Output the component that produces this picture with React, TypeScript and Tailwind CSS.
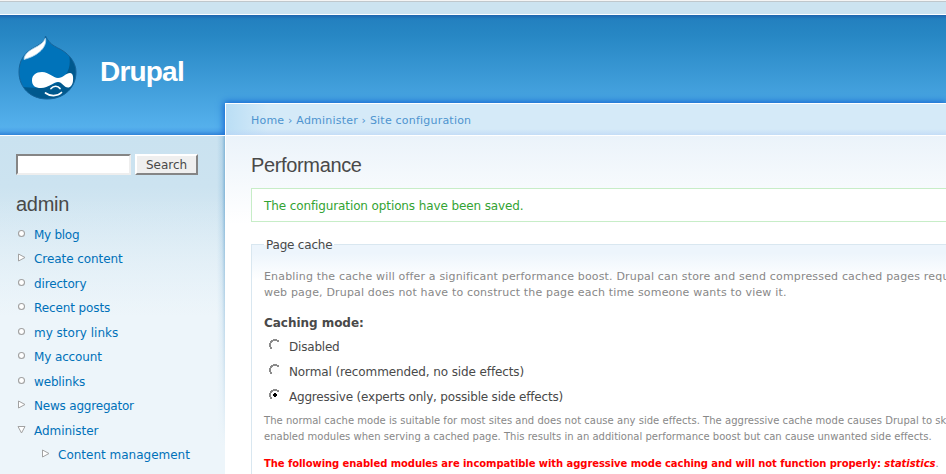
import React from 'react';

const dropPath =
  'M27.500 1C27 5 25 7.500 22 9C18 11.500 15 13 12 15C5 20 1 27 1 37C1 53 13 64 29 64C46 64 58 53 58 37C58 28 52 20 43.700 15C38 12 34 10 32 7.700C30 5.500 28.500 3 27.500 1Z';

function Logo() {
  return (
    <svg width="60" height="66" viewBox="0 0 60 66" className="block">
      <defs>
        <clipPath id="drop"><path d={dropPath} /></clipPath>
      </defs>
      <path d={dropPath} fill="#0073ba" />
      <g clipPath="url(#drop)">
        <path d="M51 20C54 33 48 44 36 49C24 54 10 53 1 51.500L8 66H60V20Z" fill="#00598e" />
      </g>
      <path d={dropPath} fill="none" stroke="#17649a" strokeWidth="1" />
      <path d="M27 3.500C26 7 22 10 18 12C12 15 6 19 6 24.500C11 23 17 21 22 16.500C26 13 28.500 8 27.500 3.500Z" fill="#fff" stroke="#a9d0ea" strokeWidth="0.800" />
      <path d="M14 45.500C14 40 18 37 24 37C31 37 35 43 40 43C45 43 48 38 52 38C55 38 55.500 42 55 46C54.500 50 52.500 52.500 50 52.500C46 52.500 44 47 40 47C35 47 31 53 23 53C17 53 14 50.500 14 45.500Z" fill="#fff" />
      <path d="M33 53.500C35.500 50.500 40 50.500 42 53.500M27.500 58C32 61.500 39.500 61.500 43.500 57.500" fill="none" stroke="#fff" strokeWidth="1.700" strokeLinecap="round" />
    </svg>
  );
}

type Kind = 'leaf' | 'closed' | 'open';

function Bullet({ kind }: { kind: Kind }) {
  return (
    <svg width="9" height="9" viewBox="0 0 9 9" className="block shrink-0" fill="#fff" stroke="#a2a2a2">
      {kind === 'leaf' && <circle cx="4.500" cy="4.500" r="3" strokeWidth="1.100" />}
      {kind === 'closed' && <path d="M1.500 1V8L8 4.500Z" strokeLinejoin="round" />}
      {kind === 'open' && <path d="M1 1.500H8L4.500 8Z" strokeLinejoin="round" />}
    </svg>
  );
}

const menu: { label: string; kind: Kind; nested?: boolean; spacing: string }[] = [
  { label: 'My blog', kind: 'leaf', spacing: 'tracking-[-0.280px]' },
  { label: 'Create content', kind: 'closed', spacing: 'tracking-[-0.070px]' },
  { label: 'directory', kind: 'leaf', spacing: 'tracking-[-0.150px]' },
  { label: 'Recent posts', kind: 'leaf', spacing: 'tracking-[-0.100px]' },
  { label: 'my story links', kind: 'leaf', spacing: 'tracking-[0px]' },
  { label: 'My account', kind: 'leaf', spacing: 'tracking-[-0.120px]' },
  { label: 'weblinks', kind: 'leaf', spacing: 'tracking-[-0.150px]' },
  { label: 'News aggregator', kind: 'closed', spacing: 'tracking-[-0.200px]' },
  { label: 'Administer', kind: 'open', spacing: 'tracking-[-0.050px]' },
  { label: 'Content management', kind: 'closed', nested: true, spacing: 'tracking-[0px]' },
];

function Radio({ checked }: { checked?: boolean }) {
  return (
    <svg width="12" height="12" viewBox="0 0 12 12" className="-mt-1 block shrink-0" fill="none" shapeRendering="crispEdges">
      <path d="M4 1H8V2H10V4H11V8H10V10H8V11H4V10H2V8H1V4H2V2H4Z" fill="#fdfdfd" />
      <path d="M4 0H8V1H10V3H8V2H4V3H3V4H2V8H3V10H1V8H0V4H1V2H2V1H4Z" fill="#8a8a8a" />
      {checked && <path d="M5 4H7V5H8V7H7V8H5V7H4V5H5Z" fill="#000" />}
    </svg>
  );
}

const modes = [
  { label: 'Disabled', checked: false, spacing: 'tracking-[-0.200px]' },
  { label: 'Normal (recommended, no side effects)', checked: false, spacing: 'tracking-[-0.110px]' },
  { label: 'Aggressive (experts only, possible side effects)', checked: true, spacing: 'tracking-[-0.190px]' },
];

export default function App() {
  return (
    <div className="flex h-[474px] w-[946px] flex-col overflow-hidden bg-[#edf5fa] font-['DejaVu_Sans',sans-serif] text-[12px] text-[#494949]">
      <div className="h-[15px] shrink-0 border-b border-white bg-[#cce3f0]">
        <div className="h-px bg-[#f4f4f4]" />
        <div className="h-px bg-[#bfc7cc]" />
      </div>
      <div className="flex h-[459px] bg-[linear-gradient(180deg,#1f66ae_0px,#2380bf_4px,#2787c4_20px,#55b0ec_112px,#4ca4e9_116px,#2f83d8_120px)]">
        <aside className="flex w-[225px] shrink-0 flex-col">
          <header className="flex h-[120px] shrink-0 pl-[18px] pt-[20px]">
            <Logo />
            <h1 className="ml-[22px] pt-[20px] font-['Liberation_Sans',Arial,sans-serif] text-[28px] font-bold leading-[34px] tracking-[-0.800px] text-white">Drupal</h1>
          </header>
          <div className="relative grow border-t border-white bg-[linear-gradient(180deg,transparent_60px,#edf5fa_310px),linear-gradient(90deg,transparent_217px,#5f9fcb33_222px,#5f9fcbaa_225px),linear-gradient(180deg,#cae2f0_0px,#cce3f0_50px,#edf5fa_180px)] px-4 pt-[18px]">
            <form className="flex h-[21px] gap-1">
              <input aria-label="Search terms" className="h-[21px] w-[115px] border-2 border-b-[#eee] border-l-[#858585] border-r-[#eee] border-t-[#858585] bg-white" />
              <button type="button" className="h-[21px] w-[63px] border-2 border-b-[#858585] border-l-white border-r-[#858585] border-t-white bg-[#efefef] leading-[18px]">Search</button>
            </form>
            <h2 className="mt-[17px] h-[30.500px] font-['Liberation_Sans',Arial,sans-serif] text-[20px] leading-[24px] tracking-[-0.300px]">admin</h2>
            <ul>
              {menu.map((item) => (
                <li key={item.label} className={`flex h-[24.500px] items-center gap-2 text-[#0071b9] ${item.nested ? 'pl-[25px]' : 'pl-px'}`}>
                  <span className="-mt-[3px]"><Bullet kind={item.kind} /></span>
                  <a className={`whitespace-nowrap ${item.spacing}`}>{item.label}</a>
                </li>
              ))}
            </ul>
          </div>
        </aside>
        <div className="flex w-[721px] flex-col">
          <div className="h-[88px] shrink-0" />
          <main className="flex grow flex-col">
            <nav className="h-[33px] shrink-0 border-b border-l border-t border-white bg-[linear-gradient(180deg,transparent_25px,#b8d3f5aa_32px),linear-gradient(90deg,#badef5_0,#d5eaf8_42px)] pl-[25px] text-[11px] leading-[33px] text-[#4e94cf] shadow-[0_0_7px_1px_#0f5fd0]">
              <span className="whitespace-nowrap tracking-[0.210px]">Home › Administer › Site configuration</span>
            </nav>
            <div className="relative grow border-l border-white bg-[linear-gradient(180deg,#ebf3fa_0,#fff_88px)] pl-[25px]">
              <h2 className="h-[52px] pt-[17px] font-['Liberation_Sans',Arial,sans-serif] text-[20px] leading-[24px] tracking-[-0.350px]">Performance</h2>
              <div className="h-[34px] border border-r-0 border-[#c7edc7] bg-white pl-3 leading-[34px] text-[#33a333]">
                <span className="tracking-[-0.110px]">The configuration options have been saved.</span>
              </div>
              <fieldset className="mt-[14px] h-[250px] w-[740px] border border-[#d9e7f0] bg-[linear-gradient(180deg,#edf5fc_8px,#fff_35px)] px-3">
                <legend className="h-[16px] px-[2px] leading-[18px] tracking-[-0.200px]">Page cache</legend>
                <div className="mt-[17px] whitespace-nowrap text-[11px] leading-[16px] text-[#888]">
                  <p><span className="tracking-[0.170px]">Enabling the cache will offer a significant performance boost. Drupal can store and send compressed cached pages requ</span></p>
                  <p><span className="tracking-[0.170px]">web page, Drupal does not have to construct the page each time someone wants to view it.</span></p>
                </div>
                <h3 className="mt-[14px] font-bold leading-[16px] tracking-[-0.040px]">Caching mode:</h3>
                <div className="mt-[3px]">
                  {modes.map((mode) => (
                    <label key={mode.label} className="flex h-[25px] items-center gap-2 whitespace-nowrap pl-[5px]">
                      <Radio checked={mode.checked} />
                      <span className={mode.spacing}>{mode.label}</span>
                    </label>
                  ))}
                </div>
                <div className="mt-[4px] whitespace-nowrap text-[10px] leading-[16px] text-[#888]">
                  <p><span className="tracking-[0.030px]">The normal cache mode is suitable for most sites and does not cause any side effects. The aggressive cache mode causes Drupal to sk</span></p>
                  <p><span className="tracking-[0.015px]">enabled modules when serving a cached page. This results in an additional performance boost but can cause unwanted side effects.</span></p>
                  <p className="mt-[11px]"><strong className="tracking-[-0.070px] text-[#f00]">The following enabled modules are incompatible with aggressive mode caching and will not function properly: <em>statistics</em></strong>.</p>
                </div>
              </fieldset>
            </div>
          </main>
        </div>
      </div>
    </div>
  );
}
